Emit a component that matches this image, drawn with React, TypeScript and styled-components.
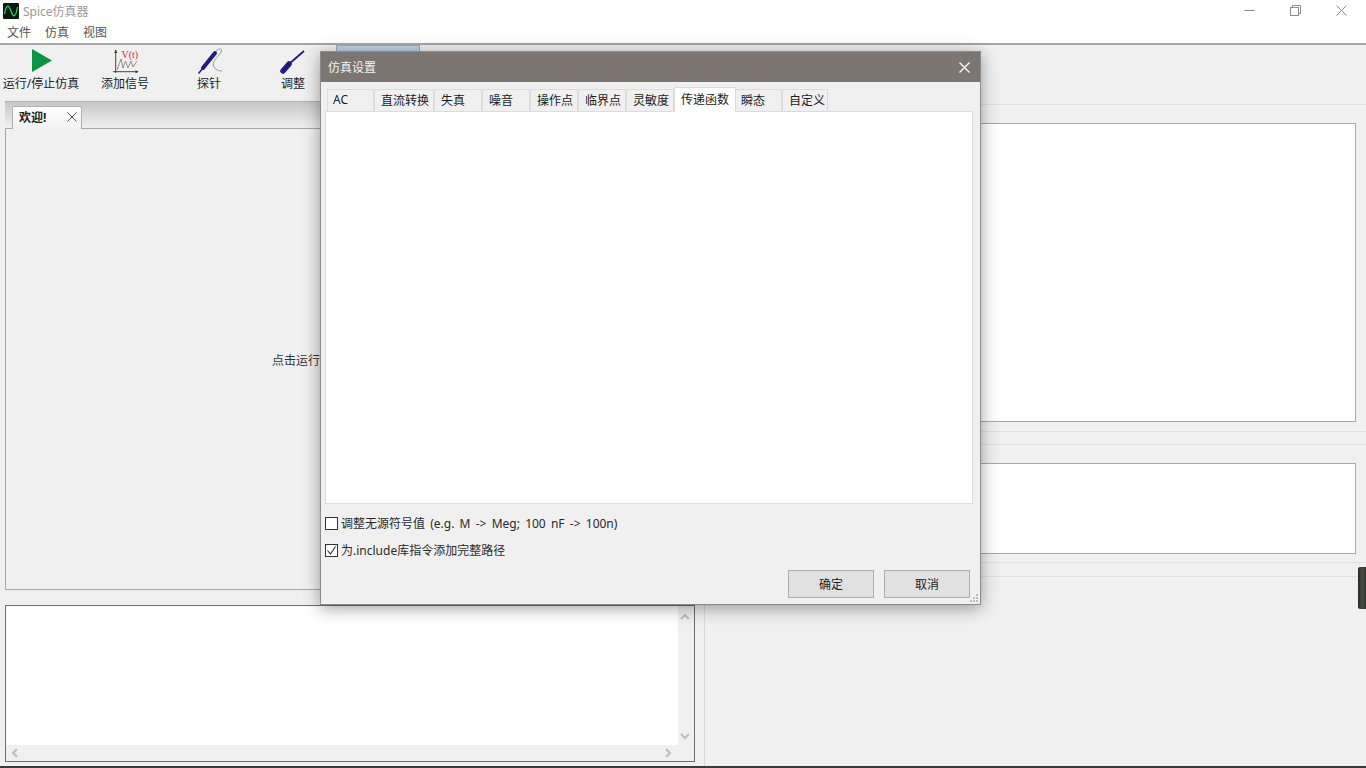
import React from "react";
import styled, { createGlobalStyle } from "styled-components";

const Global = createGlobalStyle`
  html, body { margin: 0; padding: 0; width: 1366px; height: 768px; overflow: hidden; background: #f0f0f0; }
  * { box-sizing: border-box; }
  body { font-family: "Noto Sans", "Noto Sans CJK SC", sans-serif; font-size: 12px; color: #1c1c1c; }
`;

const Page = styled.div`
  position: relative;
  width: 1366px;
  height: 768px;
  display: flex;
  flex-direction: column;
  overflow: hidden;
`;
const TitleBar = styled.div`
  height: 22px;
  background: #fff;
  display: flex;
  align-items: center;
  padding: 0 2px 0 3px;
`;
const AppTitle = styled.span`
  margin-left: 4px;
  color: #9a9a9a;
  flex: 1;
`;
const WinButton = styled.div`
  width: 46px;
  height: 22px;
  padding-bottom: 2px;
  display: flex;
  align-items: center;
  justify-content: center;
`;
const MenuBar = styled.div`
  height: 21px;
  padding: 0 0 2px 7px;
  background: #fff;
  display: flex;
  align-items: center;
  gap: 14px;
  color: #555;
`;
const Toolbar = styled.div`
  height: 57px;
  border-top: 2px solid #a6a6a6;
  background: #f0f0f0;
  display: flex;
`;
const ToolButton = styled.div<{ $hover?: boolean }>`
  width: 84px;
  height: 55px;
  padding: 2px 2px 0 0;
  display: flex;
  flex-direction: column;
  align-items: center;
  background: ${(p) => (p.$hover ? "#bcd3e8" : "transparent")};
  border: 1px solid ${(p) => (p.$hover ? "#8cb0d2" : "transparent")};
  svg { display: block; }
`;
const ToolLabel = styled.span`
  margin-top: 2px;
  line-height: 16px;
  white-space: nowrap;
`;
const Main = styled.div`
  height: 666px;
  display: flex;
`;
const LeftColumn = styled.div`
  width: 704px;
  padding: 1px 9px 4px 5px;
  display: flex;
  flex-direction: column;
`;
const TabHeader = styled.div`
  height: 27px;
  background: linear-gradient(#c6c6c6, #e4e4e4 70%, #efefef);
  border-top: 1px solid #b4b4b4;
  padding: 4px 0 0 7px;
  display: flex;
`;
const WelcomeTab = styled.div`
  width: 70px;
  height: 23px;
  padding: 0 4px 2px 6px;
  background: linear-gradient(#ffffff, #f2f2f2);
  border: 1px solid #aeaeae;
  border-bottom: none;
  border-radius: 2px 2px 0 0;
  display: flex;
  align-items: center;
  justify-content: space-between;
  font-weight: 700;
  z-index: 1;
`;
const WelcomePane = styled.div`
  height: 462px;
  padding-top: 2px;
  border: 1px solid #a8a8a8;
  display: flex;
  align-items: center;
  justify-content: center;
  color: #333;
`;
const LogBox = styled.div`
  margin-top: 15px;
  height: 157px;
  border: 1px solid #6e6e6e;
  background: #fff;
  display: grid;
  grid-template-columns: 1fr 16px;
  grid-template-rows: 1fr 16px;
`;
const LogText = styled.div`
  background: #fff;
`;
const ScrollV = styled.div`
  background: #f0f0f0;
  display: flex;
  flex-direction: column;
  justify-content: space-between;
  align-items: center;
  padding: 6px 2px 4px 0;
`;
const ScrollH = styled.div`
  background: #f0f0f0;
  display: flex;
  justify-content: space-between;
  align-items: center;
  padding: 0 5px 0 4px;
`;
const ScrollCorner = styled.div`
  background: #f0f0f0;
`;
const RightColumn = styled.div`
  flex: 1;
  margin-top: 4px;
  padding-bottom: 2px;
  border-left: 1px solid #d9d9d9;
  display: flex;
  flex-direction: column;
`;
const Section = styled.div<{ $height: number; $inner: number }>`
  height: ${(p) => p.$height}px;
  border-top: 1px solid #e0e0e0;
  border-bottom: 1px solid #e0e0e0;
  padding: 18px 10px 0 10px;
  & > div { height: ${(p) => p.$inner}px; }
`;
const SectionBox = styled.div`
  background: #fff;
  border: 1px solid #a8a8a8;
`;
const SectionGap = styled.div<{ $height: number }>`
  height: ${(p) => p.$height}px;
  flex-shrink: 0;
`;
const LastSection = styled.div`
  flex: 1;
  border-top: 1px solid #e0e0e0;
`;
const BottomStrip = styled.div`
  height: 2px;
  background: #3a3a3a;
`;
const Handle = styled.div`
  position: absolute;
  right: 0;
  top: 567px;
  width: 8px;
  height: 42px;
  border-radius: 2px 0 0 2px;
  background: linear-gradient(90deg, #26282a, #4a4c42 50%, #33352f);
`;

const Dialog = styled.div`
  position: absolute;
  left: 320px;
  top: 51px;
  width: 661px;
  height: 554px;
  background: #f0f0f0;
  border: 1px solid #8c8c8c;
  box-shadow: 0 3px 16px rgba(0, 0, 0, 0.38);
  display: flex;
  flex-direction: column;
`;
const DialogTitle = styled.div`
  height: 30px;
  flex-shrink: 0;
  background: #7b7672;
  color: #f4f4f4;
  display: flex;
  align-items: center;
  justify-content: space-between;
  padding: 0 10px 0 7px;
`;
const DialogBody = styled.div`
  flex: 1;
  padding: 5px 7px 0 4px;
  display: flex;
  flex-direction: column;
  position: relative;
`;
const TabRow = styled.div`
  display: flex;
  align-items: flex-end;
  height: 24px;
  padding-left: 2px;
`;
const SetupTab = styled.div<{ $w: number; $active?: boolean }>`
  width: ${(p) => p.$w}px;
  height: ${(p) => (p.$active ? 25 : 22)}px;
  padding: 0 0 ${(p) => (p.$active ? 3 : 2)}px 6px;
  background: ${(p) => (p.$active ? "#fff" : "#f0f0f0")};
  border: 1px solid #dcdcdc;
  border-bottom: none;
  display: flex;
  align-items: center;
  white-space: nowrap;
  margin-bottom: ${(p) => (p.$active ? -1 : 0)}px;
  margin-right: ${(p) => (p.$active ? -2 : 0)}px;
  z-index: ${(p) => (p.$active ? 1 : 0)};
  &:first-child { padding-left: 5px; }
`;
const SetupPane = styled.div`
  height: 393px;
  width: 648px;
  background: #fff;
  border: 1px solid #dcdcdc;
`;
const CheckRow = styled.label<{ $mt: number }>`
  display: flex;
  align-items: center;
  height: 16px;
  margin-top: ${(p) => p.$mt}px;
  color: #2a2a2a;
  word-spacing: 2.1px;
`;
const CheckBox = styled.span`
  width: 13px;
  height: 13px;
  margin-right: 3px;
  background: #fff;
  border: 1px solid #333;
  display: flex;
  align-items: center;
  justify-content: center;
`;
const ButtonRow = styled.div`
  margin-top: 12px;
  display: flex;
  justify-content: flex-end;
  gap: 10px;
  padding-right: 3px;
`;
const DialogButton = styled.div`
  width: 86px;
  height: 28px;
  padding-bottom: 1px;
  background: #e1e1e1;
  border: 1px solid #adadad;
  display: flex;
  align-items: center;
  justify-content: center;
`;
const Grip = styled.svg`
  position: absolute;
  right: 1px;
  bottom: 1px;
`;

const Chevron = ({ d }: { d: string }) => (
  <svg width="10" height="10" viewBox="0 0 10 10">
    <polyline points={d} fill="none" stroke="#bdbdbd" strokeWidth="2" />
  </svg>
);

const tabs: [string, number][] = [
  ["AC", 47], ["直流转换", 60], ["失真", 48], ["噪音", 48], ["操作点", 48],
  ["临界点", 48], ["灵敏度", 48], ["传递函数", 62], ["瞬态", 48], ["自定义", 46],
];

export default function App() {
  return (
    <Page>
      <Global />
      <TitleBar>
        <svg width="16" height="16" viewBox="0 0 16 16">
          <rect width="16" height="16" rx="1" fill="#0a1a12" />
          <path d="M1.5 11 C3.5 1, 5.5 1, 8 8 S12.5 15, 14.5 4" fill="none" stroke="#35d05a" strokeWidth="1.3" />
        </svg>
        <AppTitle>Spice仿真器</AppTitle>
        <WinButton>
          <svg width="11" height="11" viewBox="0 0 11 11"><line x1="0.5" y1="5.5" x2="10.5" y2="5.5" stroke="#8a8a8a" /></svg>
        </WinButton>
        <WinButton>
          <svg width="11" height="11" viewBox="0 0 11 11" fill="none" stroke="#8a8a8a"><rect x="0.5" y="2.5" width="8" height="8" /><path d="M2.5 2.5 V0.5 H10.5 V8.5 H8.5" /></svg>
        </WinButton>
        <WinButton>
          <svg width="11" height="11" viewBox="0 0 11 11" stroke="#8a8a8a"><line x1="0.5" y1="0.5" x2="10.5" y2="10.5" /><line x1="10.5" y1="0.5" x2="0.5" y2="10.5" /></svg>
        </WinButton>
      </TitleBar>
      <MenuBar>
        <span>文件</span>
        <span>仿真</span>
        <span>视图</span>
      </MenuBar>
      <Toolbar>
        <ToolButton>
          <svg width="28" height="26" viewBox="0 0 28 26"><polygon points="5,1 25,12.5 5,24" fill="#0b9444" /></svg>
          <ToolLabel>运行/停止仿真</ToolLabel>
        </ToolButton>
        <ToolButton>
          <svg width="28" height="26" viewBox="0 0 28 26">
            <path d="M4.7 2 V25 M2 23.7 H27" stroke="#333" strokeWidth="0.9" fill="none" />
            <path d="M3.2 5 L4.7 1.5 L6.2 5 Z M24.5 22.2 L27.5 23.7 L24.5 25.2 Z" fill="#333" />
            <path d="M6 22 L10 11 L12 20 L14.5 13 L17 20 L20 13 L22 19 L26 13" stroke="#777" strokeWidth="0.8" fill="none" />
            <text x="10.5" y="10" fill="#d8243c" fontFamily="'Liberation Serif', serif" fontSize="10">V(t)</text>
          </svg>
          <ToolLabel>添加信号</ToolLabel>
        </ToolButton>
        <ToolButton>
          <svg width="28" height="26" viewBox="0 0 28 26" fill="none">
            <path d="M8 20 L20 5" stroke="#211c7c" strokeWidth="4" strokeLinecap="round" />
            <path d="M3.5 25.5 L8 20" stroke="#211c7c" strokeWidth="1.5" />
            <path d="M21 3 C24 0, 28 0, 26 4 C23 9, 16 14, 19 19 C20.5 22, 24 23, 27 23" stroke="#8a8a8a" strokeWidth="0.8" />
          </svg>
          <ToolLabel>探针</ToolLabel>
        </ToolButton>
        <ToolButton>
          <svg width="28" height="26" viewBox="0 0 28 26" fill="none">
            <path d="M4 23 L10 16" stroke="#211c7c" strokeWidth="5.5" strokeLinecap="round" />
            <path d="M10 16 L25 3" stroke="#211c7c" strokeWidth="1.8" />
          </svg>
          <ToolLabel>调整</ToolLabel>
        </ToolButton>
        <ToolButton $hover />
      </Toolbar>
      <Main>
        <LeftColumn>
          <TabHeader>
            <WelcomeTab>
              欢迎!
              <svg width="10" height="10" viewBox="0 0 10 10" stroke="#555"><line x1="0.5" y1="0.5" x2="9.5" y2="9.5" /><line x1="9.5" y1="0.5" x2="0.5" y2="9.5" /></svg>
            </WelcomeTab>
          </TabHeader>
          <WelcomePane>点击运行按钮开始仿真分析。</WelcomePane>
          <LogBox>
            <LogText />
            <ScrollV>
              <Chevron d="1,7 5,3 9,7" />
              <Chevron d="1,3 5,7 9,3" />
            </ScrollV>
            <ScrollH>
              <Chevron d="7,1 3,5 7,9" />
              <Chevron d="3,1 7,5 3,9" />
            </ScrollH>
            <ScrollCorner />
          </LogBox>
        </LeftColumn>
        <RightColumn>
          <Section $height={328} $inner={299}><SectionBox /></Section>
          <SectionGap $height={12} />
          <Section $height={119} $inner={91}><SectionBox /></Section>
          <SectionGap $height={13} />
          <LastSection />
        </RightColumn>
      </Main>
      <BottomStrip />
      <Handle />
      <Dialog>
        <DialogTitle>
          仿真设置
          <svg width="11" height="11" viewBox="0 0 11 11" stroke="#fff" strokeWidth="1.2"><line x1="0.5" y1="0.5" x2="10.5" y2="10.5" /><line x1="10.5" y1="0.5" x2="0.5" y2="10.5" /></svg>
        </DialogTitle>
        <DialogBody>
          <TabRow>
            {tabs.map(([label, w]) => (
              <SetupTab key={label} $w={w} $active={label === "传递函数"}>{label}</SetupTab>
            ))}
          </TabRow>
          <SetupPane />
          <CheckRow $mt={11}>
            <CheckBox />
            调整无源符号值 (e.g. M -&gt; Meg; 100 nF -&gt; 100n)
          </CheckRow>
          <CheckRow $mt={11}>
            <CheckBox>
              <svg width="11" height="11" viewBox="0 0 11 11"><polyline points="1.5,5.5 4.5,9 9.5,1.5" fill="none" stroke="#333" strokeWidth="1.1" /></svg>
            </CheckBox>
            为.include库指令添加完整路径
          </CheckRow>
          <ButtonRow>
            <DialogButton>确定</DialogButton>
            <DialogButton>取消</DialogButton>
          </ButtonRow>
          <Grip width="9" height="9" viewBox="0 0 9 9" fill="#bdbdbd">
            <rect x="6" y="0" width="2" height="2" /><rect x="3" y="3" width="2" height="2" /><rect x="6" y="3" width="2" height="2" />
            <rect x="0" y="6" width="2" height="2" /><rect x="3" y="6" width="2" height="2" /><rect x="6" y="6" width="2" height="2" />
          </Grip>
        </DialogBody>
      </Dialog>
    </Page>
  );
}
